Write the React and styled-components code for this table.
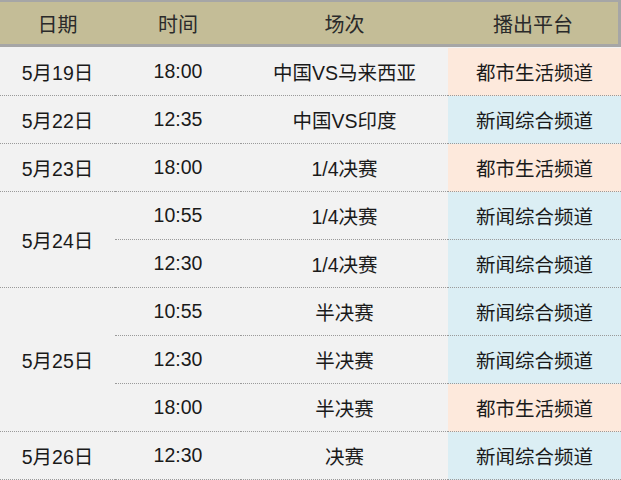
import React from "react";
import styled, { createGlobalStyle } from "styled-components";

const GlobalStyle = createGlobalStyle`
  html, body {
    margin: 0;
    padding: 0;
    background: #f2f2f2;
  }
  body {
    font-family: "Liberation Sans", "Noto Sans CJK SC", sans-serif;
  }
`;

const rows = [
  { date: "5月19日", span: 1, time: "18:00", match: "中国VS马来西亚", channel: "dushi" },
  { date: "5月22日", span: 1, time: "12:35", match: "中国VS印度", channel: "xinwen" },
  { date: "5月23日", span: 1, time: "18:00", match: "1/4决赛", channel: "dushi" },
  { date: "5月24日", span: 2, time: "10:55", match: "1/4决赛", channel: "xinwen" },
  { time: "12:30", match: "1/4决赛", channel: "xinwen" },
  { date: "5月25日", span: 3, time: "10:55", match: "半决赛", channel: "xinwen" },
  { time: "12:30", match: "半决赛", channel: "xinwen" },
  { time: "18:00", match: "半决赛", channel: "dushi" },
  { date: "5月26日", span: 1, time: "12:30", match: "决赛", channel: "xinwen" },
];

const channels = {
  dushi: { name: "都市生活频道", bg: "#fde9dc" },
  xinwen: { name: "新闻综合频道", bg: "#dbeef4" },
};

const Table = styled.div`
  display: grid;
  grid-template-columns: 115px 126px 207px 173px;
  grid-auto-rows: 48px;
  width: 621px;
  background: #f2f2f2;
  color: #1a1a1a;
`;

const HeaderCell = styled.div`
  height: 47px;
  box-sizing: border-box;
  display: flex;
  align-items: center;
  justify-content: center;
  background: #c4bd97;
  border-top: 2px solid #a6a6a6;
  border-bottom: 3px solid #a6a6a6;
  border-right: ${(p) => (p.$last ? "3px solid #a6a6a6" : "none")};
  font-size: 20px;
  color: #2a2a2a;
`;

const Cell = styled.div`
  box-sizing: border-box;
  display: flex;
  align-items: center;
  justify-content: center;
  font-size: 19.5px;
  background: ${(p) => p.$bg || "#f2f2f2"};
  border-bottom: 1px dotted #9a9a9a;
  grid-row: ${(p) => (p.$span ? `span ${p.$span}` : "auto")};
  grid-column: ${(p) => p.$col};
`;

export default function App() {
  return (
    <>
      <GlobalStyle />
      <Table>
        <HeaderCell>日期</HeaderCell>
        <HeaderCell>时间</HeaderCell>
        <HeaderCell>场次</HeaderCell>
        <HeaderCell $last>播出平台</HeaderCell>
        {rows.map((r, i) => (
          <React.Fragment key={i}>
            {r.date && (
              <Cell $col={1} $span={r.span}>
                {r.date}
              </Cell>
            )}
            <Cell $col={2}>{r.time}</Cell>
            <Cell $col={3}>{r.match}</Cell>
            <Cell $col={4} $bg={channels[r.channel].bg}>
              {channels[r.channel].name}
            </Cell>
          </React.Fragment>
        ))}
      </Table>
    </>
  );
}
